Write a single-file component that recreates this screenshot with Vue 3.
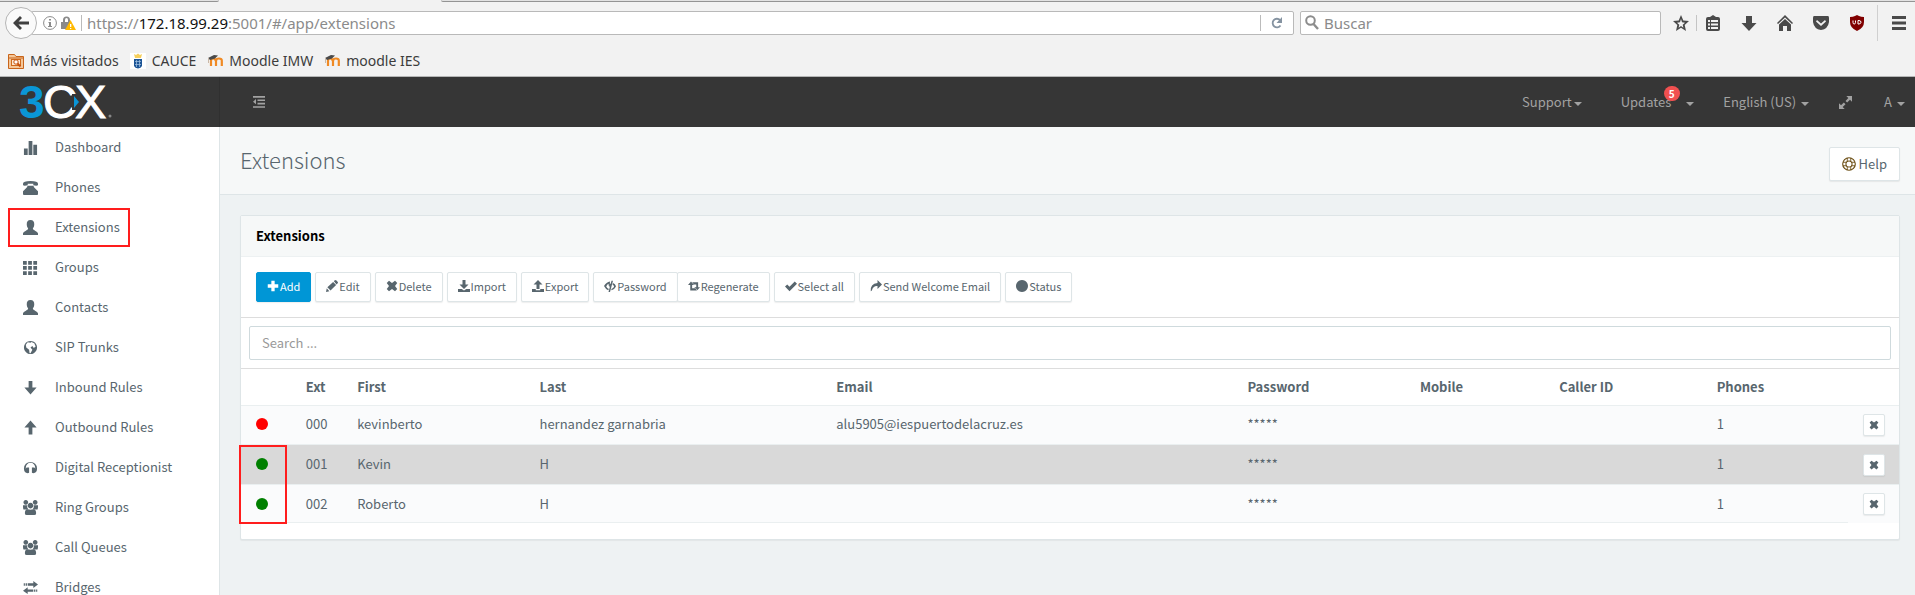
<script setup>
import { h, ref } from 'vue'

const shapes = {
  chart: 'M1 9h4v7H1zM6 1h4v15H6zM11 5h4v11h-4z',
  phone: 'M0 5V4q0-3 8-3t8 3v1q0 1-2 1l-3-.5V4H5v1.500L2 6Q0 6 0 5zM5 6h6l1 2 4 4v3q0 1-1 1H1q-1 0-1-1v-3l4-4z',
  user: 'M8 0c3 0 4 2 4 4.500C12 7 11 8 10.500 9c0 2 5.500 3 5.500 5.500V16H0v-1.500C0 12 5.500 11 5.500 9 5 8 4 7 4 4.500 4 2 5 0 8 0z',
  grid: 'M0 1h4v4H0zM5.500 1h4v4h-4zM11 1h4v4h-4zM0 6.500h4v4H0zM5.500 6.500h4v4h-4zM11 6.500h4v4h-4zM0 12h4v4H0zM5.500 12h4v4h-4zM11 12h4v4h-4z',
  globe: 'M8 1a7 7 0 1 0 .01 0zM5 2.500l3 .5 1-1 3 1.500 1.500 3.500-2 1.500L10 6.500 8 8l2 2.500-2 3.500H7l-.5-3.500L3.500 8 3 5z',
  down: 'M6 1h4v7h4.500L8 15.500 1.500 8H6z',
  up: 'M6 15.500V8H1.500L8 .5 14.500 8H10v7.500z',
  headset: 'M1 9a7 7 0 1 1 14 0c0 3-1.500 5-4 5l-1.500-.5V8h2q1.300 0 1.500 1.500V8A5 5 0 0 0 3 8v1.500Q3.200 8 4.500 8h2v5.500L5 14c-2.500 0-4-2-4-5z',
  group: 'M8 3a3 3 0 1 1-.01 0zM3 0a2.500 2.500 0 1 1-.01 0zM13 0a2.500 2.500 0 1 1-.01 0zM0 5.500h4.500Q4 8 5.500 9.500L3 10H.5Q0 9 0 7zM16 5.500h-4.500Q12 8 10.500 9.500l2.500.5h2.500q.5-1 .5-3zM5 9.800q3 1 6 0 3 0 3 4.200 0 2-2 2H4q-2 0-2-2 0-4.200 3-4.200z',
  bridge: 'M5 3.500h6V1l5 3.800-5 3.700V6H5zM2.800 3.500h1.400V6H2.800zM.8 3.500h1.200V6H.8zM11 10H5V7.800l-5 3.700L5 15v-2.500h6zM11.800 10h1.400v2.500h-1.400zM14 10h1.200v2.500H14z',
  plus: 'M5.800 1h4.400v4.800H15v4.400h-4.800V15H5.800v-4.800H1V5.800h4.800z',
  pencil: 'M0 16l1-5 3.500 4zM1.800 9.800L9.500 2.500l4 4L6 14zM10.500 1.500L12 0q1 0 2 .5L16 3q0 1-1 2l-1 1z',
  cross: 'M1 4l3-3 4 3 4-3 3 3-3 4 3 4-3 3-4-3-4 3-3-3 3-4z',
  import: 'M6 0h4v6h4l-6 6-6-6h4zM0 12h5l3 2 3-2h5v4H0z',
  export: 'M8 0l6 6h-4v6H6V6H2zM0 12h5v1.500h6V12h5v4H0z',
  eyeoff: 'M8 2Q3 3 0 8q2 4 5.500 5.700L6.500 12Q4 11 3 8.500 4 6 6 5q0 3 1.500 4.500zM10 1h2L8 16H6zM12 4q3 1.500 4 4.300-2 4.700-6.500 5.400l.8-2Q12.500 11 13.500 8.500 12.800 7 11.300 6zM7.500 5.500l1.500-1-1 4z',
  retweet: 'M4 2l4 4.500H5.500V11h5l2 3H3V6.500H0zM5.500 3h8v6.500H16L12 14 8.500 9.500H11V6H8z',
  check: 'M0 8.500L3 6l3 3L13 2l3 3-10 10z',
  share: 'M10 0l6 6-6 6V8Q4 7.500 2.500 14L1 15Q0 5 10 4z',
  circle: 'M8 0a8 8 0 1 1-.01 0z',
  outdent: 'M0 0h16v2.300H0zM6 4.500h10v2.300H6zM6 9h10v2.300H6zM0 13.500h16v2.300H0zM4 4v7L0 7.500z',
  expand: 'M9 0h7v7l-2.500-2.500-3.500 3.500L8 6l3.500-3.500zM7 16H0V9l2.500 2.500L6 8l2 2-3.500 3.500z',
  arrowLeft: 'M0 8l7-7 2 2-3.500 3.500H16v3H5.500L9 13l-2 2z',
  star: 'M8 0l2.300 5.500 5.700.5-4.300 4L13 16l-5-3.300L3 16l1.300-6L0 6l5.700-.5zM8 4L7 7.200l-3 .5 2.300 2-.7 3L8 11l2.400 1.700-.7-3 2.300-2-3-.5z',
  clip: 'M1 4q0-2 2-2h2l3-2 3 2h2q2 0 2 2v10q0 2-2 2H3q-2 0-2-2zM3 5v2h2V5zM6 5v2h7V5zM3 8.500v2h2v-2zM6 8.500v2h7v-2zM3 12v2h2v-2zM6 12v2h7v-2z',
  download: 'M5 1h6v7h4.500L8 16 .5 8H5z',
  home: 'M8 0l8 8-1 1-7-6.500L1 9 0 8zM8 4l6 5.500V16h-4v-5H6v5H2V9.500z',
  pocket: 'M1 1h14q1 0 1 2v4q-1 7-8 8-7-1-8-8V3q0-2 1-2zM4 5L3 6.500 8 11l5-4.500L12 5 8 8.500z',
  menu: 'M1 1h14v3H1zM1 6.500h14v3H1zM1 12h14v3H1z'
}

const Icon = (props) =>
  h('svg', { viewBox: '0 0 16 16', class: 'icon', fill: 'currentColor', 'aria-hidden': 'true' }, [
    h('path', { d: shapes[props.name], 'fill-rule': 'evenodd' })
  ])
Icon.props = ['name']

const browserTools = [
  { icon: 'clip', label: 'Library' },
  { icon: 'download', label: 'Downloads' },
  { icon: 'home', label: 'Home' },
  { icon: 'pocket', label: 'Pocket' }
]

const nav = [
  { label: 'Dashboard', icon: 'chart' },
  { label: 'Phones', icon: 'phone' },
  { label: 'Extensions', icon: 'user', marked: true },
  { label: 'Groups', icon: 'grid' },
  { label: 'Contacts', icon: 'user' },
  { label: 'SIP Trunks', icon: 'globe' },
  { label: 'Inbound Rules', icon: 'down' },
  { label: 'Outbound Rules', icon: 'up' },
  { label: 'Digital Receptionist', icon: 'headset' },
  { label: 'Ring Groups', icon: 'group' },
  { label: 'Call Queues', icon: 'group' },
  { label: 'Bridges', icon: 'bridge' }
]

const actions = [
  [{ label: 'Add', icon: 'plus', primary: true }],
  [{ label: 'Edit', icon: 'pencil' }],
  [{ label: 'Delete', icon: 'cross' }],
  [{ label: 'Import', icon: 'import' }],
  [{ label: 'Export', icon: 'export' }],
  [{ label: 'Password', icon: 'eyeoff' }, { label: 'Regenerate', icon: 'retweet' }],
  [{ label: 'Select all', icon: 'check' }],
  [{ label: 'Send Welcome Email', icon: 'share' }],
  [{ label: 'Status', icon: 'circle' }]
]

const rows = [
  { ext: '000', first: 'kevinberto', last: 'hernandez garnabria', email: 'alu5905@iespuertodelacruz.es', online: false },
  { ext: '001', first: 'Kevin', last: 'H', email: '', online: true, selected: true },
  { ext: '002', first: 'Roberto', last: 'H', email: '', online: true }
]

const search = ref('')
const webSearch = ref('')
</script>

<template>
  <div class="screen">
    <div class="browser">
      <div class="tabs"><span class="tab-left"></span><span class="tab-right"></span></div>
      <div class="navbar">
        <button class="back" aria-label="Back"><Icon name="arrowLeft" /></button>
        <div class="url">
          <svg class="info" viewBox="0 0 14 14" aria-hidden="true">
            <circle cx="7" cy="7" r="6.400" fill="none" stroke="#8a8a8a" />
            <path d="M6 3h2v1.500H6zM5.500 6H8v4h1v1H5v-1h1V7h-.5z" fill="#8a8a8a" />
          </svg>
          <svg class="lock" viewBox="0 0 15 14" aria-hidden="true">
            <path d="M2 6V4a3.500 3.500 0 0 1 7 0v2h1v7H0V6z" fill="#8a8a8a" />
            <path d="M4 6V4q0-2 1.500-2T7 4v2z" fill="#fff" />
            <path d="M9.500 4L15 14H4z" fill="#ffb900" />
            <path d="M9 8h1.300v3H9zM9 12h1.300v1H9z" fill="#fff" />
          </svg>
          <span class="address">https://<b>172.18.99.29</b>:5001/#/app/extensions</span>
          <button class="reload" aria-label="Reload">
            <svg viewBox="0 0 14 14" aria-hidden="true">
              <path d="M10.500 9.500A4.300 4.300 0 1 1 10 4" fill="none" stroke="#8593a1" stroke-width="1.800" />
              <path d="M12 1v6H6.500z" fill="#8593a1" />
            </svg>
          </button>
        </div>
        <label class="web-search">
          <svg viewBox="0 0 14 16" aria-hidden="true">
            <circle cx="5.500" cy="5.500" r="4.300" fill="none" stroke="#8c8c8c" stroke-width="2" />
            <path d="M8.500 9l4.500 5" stroke="#8c8c8c" stroke-width="2.400" />
          </svg>
          <input v-model="webSearch" type="text" placeholder="Buscar" aria-label="Buscar" />
        </label>
        <div class="tools">
          <button class="star" aria-label="Bookmark"><Icon name="star" /></button>
          <button v-for="t in browserTools" :key="t.icon" :aria-label="t.label"><Icon :name="t.icon" /></button>
          <button aria-label="uBlock">
            <svg class="icon" viewBox="0 0 16 16" aria-hidden="true">
              <path d="M8 0l2 1q2 1 5 1v5q0 6-7 9Q1 13 1 7V2q3 0 5-1z" fill="#800000" />
              <path d="M4 5.500v2q0 1.500 1.200 1.500T6.500 7.500v-2M9 5.500V9h1q2-.3 2-1.800T10 5.500z" fill="none" stroke="#fff" />
            </svg>
          </button>
          <button class="menu" aria-label="Menu"><Icon name="menu" /></button>
        </div>
      </div>
      <div class="bookmarks">
        <a href="#">
          <svg viewBox="0 0 16 16" aria-hidden="true">
            <path d="M.5 1.500h6l1.500 2h7.500v12H.5z" fill="#f4c79a" stroke="#c8641a" />
            <path d="M1 5h14" stroke="#c8641a" />
            <rect x="3.500" y="6.500" width="9" height="6" fill="#fbe6cf" stroke="#d06a1c" />
            <circle cx="8" cy="9" r="2.200" fill="#fff" stroke="#c8500a" />
            <path d="M9.500 10.500l3 3" stroke="#c8500a" stroke-width="2" />
          </svg>Más visitados</a>
        <a href="#">
          <svg viewBox="0 0 16 16" aria-hidden="true">
            <rect width="16" height="16" fill="#fff" />
            <path d="M4 1l2 1 2-1.500L10 2l2-1-1 4H5z" fill="#f6cf5c" />
            <path d="M4 6h8v7q-1 2-4 2.500Q5 15 4 13z" fill="#1d5596" />
            <path d="M5 8.500h6M5 11.500h6M6.500 7v7M9.500 7v7" stroke="#a9c7e5" stroke-width=".7" />
          </svg>CAUCE</a>
        <a v-for="m in ['Moodle IMW', 'moodle IES']" :key="m" href="#">
          <svg viewBox="0 0 16 16" aria-hidden="true">
            <path d="M4 13V8q0-2.500 2-2.500T9 8v5M9 8q0-2.500 3-2.500T14.800 8v5" fill="none" stroke="#f08a24" stroke-width="2.200" />
            <path d="M1 5l6-3 4 .5L8 5.500 3 7z" fill="#4a4a4a" />
            <path d="M1.500 5v5" stroke="#c9b8a8" />
          </svg>{{ m }}</a>
      </div>
    </div>

    <header class="topbar">
      <a class="brand" href="#" aria-label="3CX">
        <svg viewBox="0 0 96 50" aria-hidden="true">
          <text class="logo-three" x="-1" y="41">3</text>
          <text class="logo-cx" x="23" y="41">C</text>
          <text class="logo-cx" x="55" y="41">X</text>
          <path d="M52 17h5v16h-5z" fill="#363636" />
          <path d="M54 19l5 6-5 6z" fill="#0a96d7" />
          <circle cx="90" cy="39" r="1.500" fill="#888" />
        </svg>
      </a>
      <button class="collapse" aria-label="Toggle menu"><Icon name="outdent" /></button>
      <nav class="account">
        <button class="support">Support<i class="caret"></i></button>
        <button class="updates">Updates<span class="badge">5</span><i class="caret"></i></button>
        <button class="language">English (US)<i class="caret"></i></button>
        <button class="fullscreen" aria-label="Full screen"><Icon name="expand" /></button>
        <button class="profile">A<i class="caret"></i></button>
      </nav>
    </header>

    <div class="body">
      <nav class="sidebar">
        <a v-for="item in nav" :key="item.label" href="#" :class="{ marked: item.marked }">
          <Icon :name="item.icon" />{{ item.label }}
        </a>
      </nav>
      <main>
        <div class="title-bar">
          <h1>Extensions</h1>
          <button class="help">
            <svg viewBox="0 0 16 16" fill="none" stroke="#6b4d12" aria-hidden="true">
              <circle cx="8" cy="8" r="7.200" stroke-width="1.300" />
              <circle cx="8" cy="8" r="3.500" stroke-width="1.200" />
              <path d="M6 1v4M10 1v4M6 11v4M10 11v4M1 6h4M1 10h4M11 6h4M11 10h4" stroke-width="1" />
            </svg>Help
          </button>
        </div>
        <section class="panel">
          <h2>Extensions</h2>
          <div class="toolbar">
            <div v-for="(set, i) in actions" :key="i" class="set">
              <button v-for="a in set" :key="a.label" :class="{ primary: a.primary }"><Icon :name="a.icon" />{{ a.label }}</button>
            </div>
          </div>
          <div class="filter"><input v-model="search" type="text" placeholder="Search ..." aria-label="Search" /></div>
          <div class="listing">
            <table>
              <colgroup>
                <col class="c-dot" /><col class="c-ext" /><col class="c-first" /><col class="c-last" /><col class="c-email" />
                <col class="c-pass" /><col class="c-mobile" /><col class="c-caller" /><col class="c-phones" /><col />
              </colgroup>
              <thead>
                <tr><th></th><th>Ext</th><th>First</th><th>Last</th><th>Email</th><th>Password</th><th>Mobile</th><th>Caller ID</th><th>Phones</th><th></th></tr>
              </thead>
              <tbody>
                <tr v-for="r in rows" :key="r.ext" :class="{ selected: r.selected }">
                  <td><span class="dot" :class="{ online: r.online }"></span></td>
                  <td>{{ r.ext }}</td>
                  <td>{{ r.first }}</td>
                  <td>{{ r.last }}</td>
                  <td>{{ r.email }}</td>
                  <td>*****</td>
                  <td></td>
                  <td></td>
                  <td>1</td>
                  <td class="row-action"><button class="remove" aria-label="Delete"><Icon name="cross" /></button></td>
                </tr>
              </tbody>
            </table>
            <span class="status-mark"></span>
          </div>
        </section>
      </main>
    </div>
  </div>
</template>

<style>
body { margin: 0; }
</style>

<style scoped>
*, *::after { box-sizing: border-box; }
.screen {
  height: 100vh;
  overflow: hidden;
  display: flex;
  flex-direction: column;
  background: #eef2f3;
  color: #58666e;
  font: 13px/20px "Noto Sans CJK SC", "Open Sans", sans-serif;
}
button { font: inherit; color: inherit; background: none; border: 0; padding: 0; display: flex; align-items: center; }
a { color: inherit; text-decoration: none; }
.icon { display: block; width: 16px; height: 16px; flex: none; }

.browser { flex: none; height: 77px; background: #f2f2f2; border-bottom: 1px solid #b5b6b6; color: #3c3c3c; font: 15px/20px "Noto Sans", sans-serif; }
.tabs { display: flex; justify-content: space-between; height: 2px; }
.tab-left { width: 219px; border-bottom: 1px solid #949494; background: #e2e2e2; border-bottom-right-radius: 4px; }
.tab-right { width: calc(100% - 441px); border-bottom: 1px solid #949494; background: #e2e2e2; border-bottom-left-radius: 4px; }
.navbar { display: flex; align-items: center; height: 42px; padding-left: 5px; }
.back { width: 32px; height: 32px; border: 1px solid #b5b5b5; border-radius: 50%; background: #fafafa; justify-content: center; flex: none; z-index: 1; color: #404040; }
.url { flex: 1; display: flex; align-items: center; height: 24px; margin-left: -6px; padding-left: 11px; background: #fff; border: 1px solid #b9b9b9; border-radius: 2px; }
.info { width: 14px; height: 14px; }
.lock { width: 15px; height: 14px; margin-left: 4px; }
.address { flex: 1; margin-left: 5px; padding-left: 5px; border-left: 1px solid #bbb; line-height: 16px; color: #8b8b8b; white-space: nowrap; }
.address b { font-weight: 400; color: #111; }
.reload { width: 33px; height: 16px; border-left: 1px solid #bbb; justify-content: center; }
.reload svg { width: 14px; height: 14px; }
.web-search { width: 361px; height: 24px; margin-left: 6px; display: flex; align-items: center; padding-left: 4px; background: #fff; border: 1px solid #b9b9b9; border-radius: 2px; }
.web-search svg { width: 14px; height: 16px; }
.web-search input { flex: 1; margin-left: 5px; border: 0; padding: 0; outline: 0; background: none; font: inherit; }
.web-search input::placeholder { color: #8b8b8b; opacity: 1; }
.tools { display: flex; align-items: center; color: #4a4a4a; }
.tools button { width: 36px; height: 16px; justify-content: center; }
.tools .star { border-right: 1px solid #c4c4c4; padding: 0 7px 0 12px; margin-right: -2px; }
.tools .menu { border-left: 1px solid #d0d0d0; height: 36px; width: 38px; padding-left: 4px; margin-left: 2px; }
.bookmarks { display: flex; align-items: center; gap: 11px; height: 32px; padding: 1px 0 0 8px; font-size: 14px; }
.bookmarks a { display: flex; align-items: center; gap: 6px; }
.bookmarks svg { width: 16px; height: 16px; }

.topbar { flex: none; height: 50px; display: flex; align-items: center; background: #363636; color: #a2a2a2; }
.brand { width: 220px; height: 50px; padding-left: 20px; border-right: 1px solid #303030; }
.brand svg { width: 96px; height: 50px; display: block; overflow: visible; }
.logo-three { font: bold 46px "Liberation Sans", sans-serif; fill: #0a96d7; }
.logo-cx { font: 47px "Liberation Sans", sans-serif; fill: #fff; stroke: #fff; }
.collapse { margin-left: 32px; }
.collapse .icon { width: 14px; height: 12px; }
.account { margin-left: auto; display: flex; align-items: center; padding-right: 10px; }
.account button { position: relative; height: 50px; }
.caret { border: 4px solid transparent; border-top-color: currentColor; border-bottom: 0; margin: 3px 0 0 2px; }
.updates { margin-left: 39px; }
.updates .caret { margin-left: 15px; }
.badge { position: absolute; left: 43px; top: 9px; width: 16px; height: 15px; border-radius: 8px; background: #f05050; color: #fff; font-size: 10px; font-weight: 700; line-height: 15px; text-align: center; }
.language { margin-left: 29px; }
.language .caret, .profile .caret { margin-left: 5px; }
.fullscreen { margin-left: 30px; }
.fullscreen .icon { width: 13px; height: 13px; }
.profile { margin-left: 32px; }

.body { flex: 1; min-height: 0; display: flex; }
.sidebar { flex: none; width: 220px; background: #fff; border-right: 1px solid #dee5e7; }
.sidebar a { position: relative; display: flex; align-items: center; gap: 17px; height: 40px; padding-left: 23px; }
.sidebar .icon { width: 15px; height: 15px; }
.marked::after { content: ""; position: absolute; left: 8px; top: 1px; width: 122px; height: 39px; border: 2px solid #ff1d1d; }
main { flex: 1; min-width: 0; }
.title-bar { display: flex; justify-content: space-between; align-items: flex-start; height: 68px; padding: 0 15px 0 20px; background: #f6f8f8; border-bottom: 1px solid #dee5e7; }
h1 { margin: 16px 0 0; font-size: 22px; font-weight: 300; line-height: 32px; }
.help { height: 34px; margin-top: 20px; padding: 0 12px; gap: 3px; background: #fff; border: 1px solid #dee5e7; border-radius: 2px; box-shadow: 0 1px 1px rgba(90, 90, 90, .1); }
.help svg { width: 14px; height: 14px; }
.panel { margin: 20px 15px 0 20px; padding-bottom: 16px; background: #fff; border: 1px solid #dee5e7; border-radius: 2px; box-shadow: 0 1px 1px rgba(0, 0, 0, .05); }
h2 { margin: 0; padding: 10px 15px; font-size: 13px; line-height: 20px; color: #000; background: #f6f8f8; border-bottom: 1px solid #edf1f2; }
.toolbar { display: flex; gap: 4px; padding: 15px; }
.set { display: flex; }
.set button { height: 30px; padding: 0 10px 2px; gap: 1px; background: #fff; border: 1px solid #dee5e7; border-radius: 2px; box-shadow: 0 1px 1px rgba(90, 90, 90, .1); font-size: 11px; white-space: nowrap; }
.set button + button { margin-left: -1px; }
.set .primary { background: #0096d6; border-color: #0096d6; color: #fff; }
.set .icon { width: 12px; height: 12px; }
.filter { padding: 8px; border: solid #ddd; border-width: 1px 0; }
.filter input { display: block; width: 100%; height: 34px; padding: 0 12px 2px; border: 1px solid #cfdadd; border-radius: 2px; font: inherit; outline: 0; }
.filter input::placeholder { color: #999; opacity: 1; }
.listing { position: relative; }
table { width: 100%; table-layout: fixed; border-collapse: separate; border-spacing: 0; }
.c-dot { width: 3%; }
.c-ext { width: 3.100%; }
.c-first { width: 11%; }
.c-last { width: 17.900%; }
.c-email { width: 24.800%; }
.c-pass { width: 10.400%; }
.c-mobile { width: 8.400%; }
.c-caller { width: 9.500%; }
.c-phones { width: 8.800%; }
th, td { padding: 0 0 0 15px; text-align: left; border-bottom: 1px solid #eaeff0; white-space: nowrap; }
th { height: 37px; font-weight: 700; }
td { height: 39px; padding-bottom: 2px; background: #fafbfc; }
.row-action { padding-bottom: 0; }
.selected td { height: 40px; background: #d9d9d9; }
tr:last-child td { height: 38px; padding-bottom: 0; }
tr:last-child .row-action { border-bottom-color: transparent; }
.dot { display: block; width: 12px; height: 12px; border-radius: 50%; background: red; }
.dot.online { background: green; }
.remove { width: 22px; height: 22px; justify-content: center; background: #fff; border: 1px solid #dee5e7; border-radius: 2px; box-shadow: 0 1px 1px rgba(90, 90, 90, .1); }
.remove .icon { width: 10px; height: 10px; }
.status-mark { position: absolute; left: -2px; top: 76px; width: 48px; height: 79px; border: 2px solid #ff1d1d; }
</style>
